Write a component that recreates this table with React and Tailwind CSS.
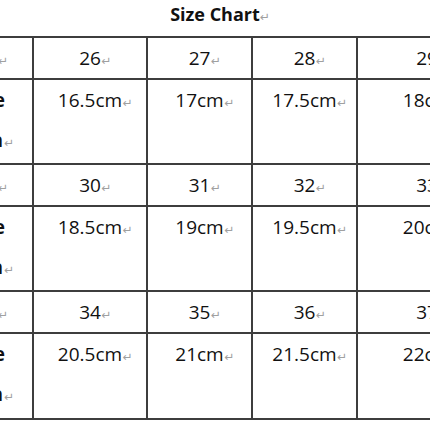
import React from 'react'

const rows = [
  { head: true, cells: ['26', '27', '28', '29'] },
  { head: false, cells: ['16.5cm', '17cm', '17.5cm', '18cm'] },
  { head: true, cells: ['30', '31', '32', '33'] },
  { head: false, cells: ['18.5cm', '19cm', '19.5cm', '20cm'] },
  { head: true, cells: ['34', '35', '36', '37'] },
  { head: false, cells: ['20.5cm', '21cm', '21.5cm', '22cm'], last: true },
]

// Word paragraph mark, takes no room so the text stays centred
function Mark({ flow }) {
  return (
    <span
      className={`inline-block w-[11px] text-[12px] leading-none font-normal text-[#a0a0a0] font-['DejaVu_Sans',sans-serif] ${
        flow ? '' : '-mr-[11px]'
      }`}
    >
      ↵
    </span>
  )
}

export default function App() {
  return (
    <div className="w-[430px] h-[430px] overflow-hidden bg-white text-[#111] font-['Open_Sans',sans-serif]">
      {/* Title */}
      <div className="h-[36px] flex items-center justify-center text-[18px] font-bold pb-[7px]">
        <span>
          Size Chart
          <Mark />
        </span>
      </div>

      {/* Table */}
      <div className="ml-[-67px] w-[565px] border-t-2 border-l-2 border-[#3d3d3d]">
        {rows.map((row, i) => (
          <div
            key={i}
            className={`grid grid-cols-[99px_114px_105px_105px_140px] ${
              row.head ? 'h-[42px]' : row.last ? 'h-[86px]' : 'h-[85px]'
            }`}
          >
            <div className="border-r-2 border-b-2 border-[#3d3d3d] font-bold text-[19px] leading-[40px] text-right">
              {row.head ? (
                <div className="pr-[24px]">
                  Size
                  <Mark flow />
                </div>
              ) : (
                <>
                  <div className="pr-[27px]">Insole</div>
                  <div className="pr-[18px]">
                    Length
                    <Mark flow />
                  </div>
                </>
              )}
            </div>
            {row.cells.map((c, j) => (
              <div
                key={j}
                className="border-r-2 border-b-2 border-[#3d3d3d] text-[19px] leading-[40px] text-center"
              >
                {c}
                <Mark />
              </div>
            ))}
          </div>
        ))}
      </div>
    </div>
  )
}
